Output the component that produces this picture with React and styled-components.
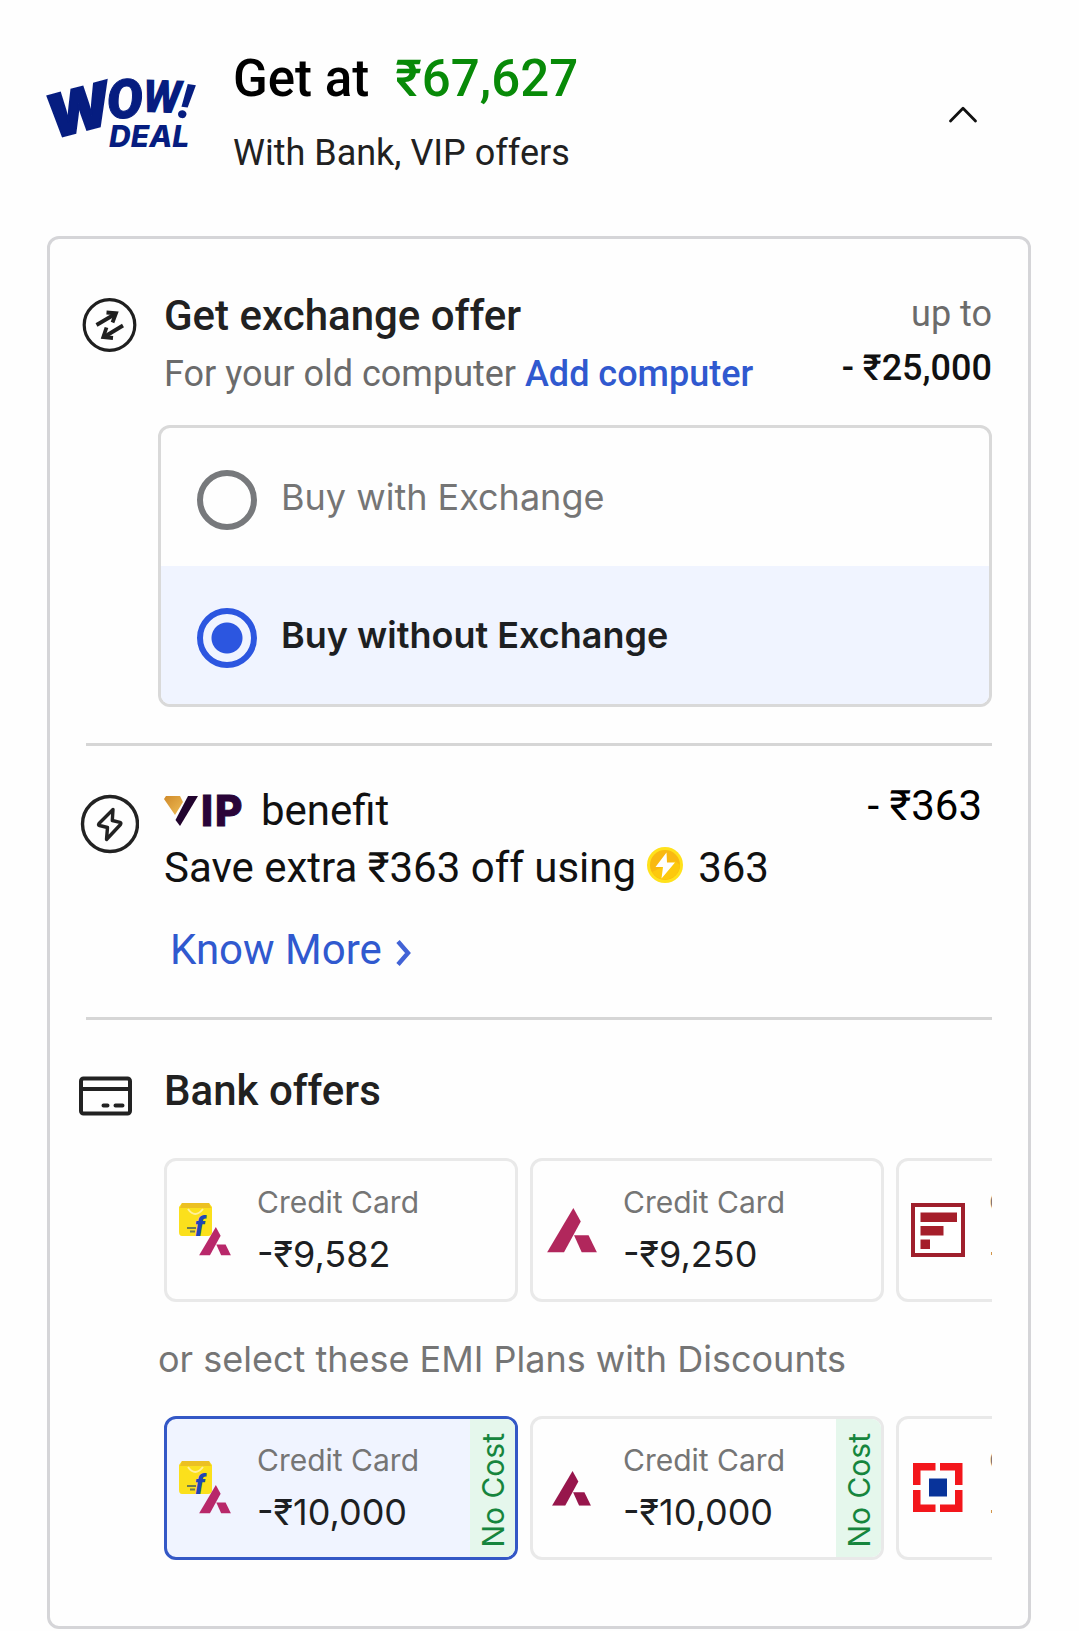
import React, { useState } from "react";
import styled, { createGlobalStyle } from "styled-components";

const exchangeOptions = [
  { id: "with", label: "Buy with Exchange" },
  { id: "without", label: "Buy without Exchange" },
];

const bankOffers = [
  { id: "flipkart-axis", logo: "flipkartAxis", amount: "-₹9,582" },
  { id: "axis", logo: "axis", amount: "-₹9,250" },
  { id: "federal", logo: "federal", amount: "-₹9,250" },
];

const emiOffers = [
  { id: "emi-flipkart-axis", logo: "flipkartAxis", amount: "-₹10,000", noCost: true },
  { id: "emi-axis", logo: "axisSmall", amount: "-₹10,000", noCost: true },
  { id: "emi-hdfc", logo: "hdfc", amount: "-₹10,000", noCost: true },
];

export default function App() {
  const [open, setOpen] = useState(true);
  const [exchange, setExchange] = useState("without");
  const [selected, setSelected] = useState("emi-flipkart-axis");

  const renderOffers = (offers) =>
    offers.map((offer) => (
      <OfferCard
        key={offer.id}
        type="button"
        $active={selected === offer.id}
        aria-pressed={selected === offer.id}
        onClick={() => setSelected(offer.id)}
      >
        <BankLogo name={offer.logo} />
        <OfferText>
          <OfferType>Credit Card</OfferType>
          <OfferAmount>{offer.amount}</OfferAmount>
        </OfferText>
        {offer.noCost && (
          <Ribbon>
            <span>No Cost</span>
          </Ribbon>
        )}
      </OfferCard>
    ));

  return (
    <Page>
      <GlobalStyle />
      <Header>
        <WowLogo />
        <HeaderText>
          <Title>
            <span>Get at</span>
            <Price>₹67,627</Price>
          </Title>
          <Subtitle>With Bank, VIP offers</Subtitle>
        </HeaderText>
        <Toggle
          type="button"
          aria-label="Toggle offers"
          aria-expanded={open}
          onClick={() => setOpen(!open)}
        >
          <svg width="30" height="18" viewBox="0 0 30 18" fill="none">
            <path
              d="M2.5 16 L15 3.3 L27.5 16"
              stroke="#111"
              strokeWidth="2.8"
              strokeLinecap="round"
              strokeLinejoin="round"
            />
          </svg>
        </Toggle>
      </Header>

      {open && (
        <Panel>
          {/* exchange */}
          <Section $top={48} $bottom={36}>
            <IconSlot $top={8}>
              <ExchangeIcon />
            </IconSlot>
            <SectionBody>
              <Row>
                <TextBlock>
                  <Heading>Get exchange offer</Heading>
                  <Description>
                    For your old computer <AddLink href="#">Add computer</AddLink>
                  </Description>
                </TextBlock>
                <Discount>
                  <span>up to</span>
                  <strong>- ₹25,000</strong>
                </Discount>
              </Row>
              <Options>
                {exchangeOptions.map((option) => (
                  <Option key={option.id} $active={exchange === option.id}>
                    <Radio
                      type="radio"
                      name="exchange"
                      value={option.id}
                      checked={exchange === option.id}
                      onChange={() => setExchange(option.id)}
                    />
                    <span>{option.label}</span>
                  </Option>
                ))}
              </Options>
            </SectionBody>
          </Section>

          <Divider />

          {/* vip */}
          <Section $top={36} $bottom={39}>
            <IconSlot $top={12}>
              <BoltIcon />
            </IconSlot>
            <SectionBody>
              <Row>
                <TextBlock>
                  <BenefitLine>
                    <VipLogo />
                    <span>benefit</span>
                  </BenefitLine>
                  <BenefitLine>
                    <span>Save extra ₹363 off using</span>
                    <Coin />
                    <span>363</span>
                  </BenefitLine>
                </TextBlock>
                <VipAmount>- ₹363</VipAmount>
              </Row>
              <KnowMore href="#">
                Know More
                <svg width="16" height="32" viewBox="0 0 16 32" fill="none">
                  <path d="M2 7.5 L12 19 L2 30.5" stroke="#4263d6" strokeWidth="4.4" />
                </svg>
              </KnowMore>
            </SectionBody>
          </Section>

          <Divider />

          {/* bank offers */}
          <Section $top={42} $bottom={66}>
            <IconSlot $top={4}>
              <CardIcon />
            </IconSlot>
            <SectionBody>
              <TextBlock>
                <Heading>Bank offers</Heading>
              </TextBlock>
              <OfferRow $top={38}>{renderOffers(bankOffers)}</OfferRow>
              <EmiLabel>or select these EMI Plans with Discounts</EmiLabel>
              <OfferRow $top={0}>{renderOffers(emiOffers)}</OfferRow>
            </SectionBody>
          </Section>
        </Panel>
      )}
    </Page>
  );
}

function WowLogo() {
  return (
    <LogoSvg viewBox="0 0 150 70" role="img" aria-label="WOW! DEAL">
      <g
        fill="#061d80"
        stroke="#061d80"
        fontFamily="Roboto, sans-serif"
        fontWeight="900"
        fontStyle="italic"
      >
        <text
          transform="translate(6 61) rotate(-15)"
          fontFamily="Inter, sans-serif"
          fontSize="59"
          strokeWidth="2"
        >
          W
        </text>
        <text transform="translate(61 41) rotate(-4)" fontSize="54" strokeWidth="1">O</text>
        <text transform="translate(95 34) rotate(2)" fontSize="46" strokeWidth="0">W</text>
        <text transform="translate(130 39) rotate(8)" fontSize="48" strokeWidth="0">!</text>
        <text
          x="62"
          y="69"
          fontFamily="Inter, sans-serif"
          fontWeight="800"
          fontSize="30"
          strokeWidth="0"
        >
          DEAL
        </text>
      </g>
    </LogoSvg>
  );
}

function ExchangeIcon() {
  return (
    <svg width="60" height="60" viewBox="0 0 60 60" fill="none" stroke="#1f1f1f">
      <circle cx="30.5" cy="30" r="25.3" strokeWidth="3.2" />
      <g strokeWidth="3.8">
        <path d="M17.5 30 L37 18.5" />
        <path d="M27.5 17.5 L37 18.3 L33.5 27.5" />
        <path d="M44 30.5 L25 42" />
        <path d="M27.5 32.5 L24.3 42 L34 43" />
      </g>
    </svg>
  );
}

function BoltIcon() {
  return (
    <svg width="60" height="60" viewBox="0 0 60 60" fill="none" stroke="#222" strokeWidth="3.4">
      <circle cx="31" cy="30" r="27.5" />
      <path
        d="M34 15.5 L20 29.5 Q18.8 31 20.5 31.5 L28.5 33.5 L27.5 45.5 L41.5 30.5 Q42.5 28.8 41 28.3 L33.3 26.5 Z"
        strokeLinejoin="round"
      />
    </svg>
  );
}

function CardIcon() {
  return (
    <svg width="60" height="60" viewBox="0 0 60 60" fill="none" stroke="#222">
      <rect x="2" y="12.5" width="49" height="35" rx="2.5" strokeWidth="4" />
      <path d="M2 23 H51" strokeWidth="4" />
      <path d="M24.5 39.5 H28.5 M36.5 39.5 H43.5" strokeWidth="4" strokeLinecap="round" />
    </svg>
  );
}

function VipLogo() {
  return (
    <svg width="82" height="32" viewBox="0 0 82 32" overflow="visible" role="img" aria-label="VIP">
      <defs>
        <linearGradient id="vipGold" x1="0" y1="0" x2="1" y2="1">
          <stop offset="0" stopColor="#cf8a2a" />
          <stop offset="1" stopColor="#f0bd55" />
        </linearGradient>
      </defs>
      <path d="M2 1 H16 L19 7 L11 20 L0 4 Z" fill="url(#vipGold)" />
      <path d="M24 1 H34 L16 31 L11.5 25 Z" fill="#22042e" />
      <text
        x="37 51"
        y="31"
        fill="#2a0438"
        stroke="#2a0438"
        strokeWidth="1"
        fontFamily="Inter, sans-serif"
        fontWeight="800"
        fontSize="42"
      >
        IP
      </text>
    </svg>
  );
}

function Coin() {
  return (
    <CoinSvg width="36" height="36" viewBox="0 0 36 36">
      <circle cx="18" cy="18" r="18" fill="#ffe11b" />
      <circle cx="18" cy="18" r="15" fill="#f9b912" />
      <path d="M5 25 A15 15 0 0 0 33 18 L28 14 Z" fill="#fdc90d" />
      <path d="M19.5 5.5 L8.5 20 H16 L14.5 31.5 L28 15.5 H20 Z" fill="#fff" />
    </CoinSvg>
  );
}

function AxisMark({ x, y, width, color }) {
  return (
    <svg x={x} y={y} width={width} height={(width * 132) / 148} viewBox="0 0 148 132">
      <path d="M78 0 L100 40 L50 132 H0 Z" fill={color} />
      <path d="M80 81 H123 L148 132 H103 Z" fill={color} />
    </svg>
  );
}

function BankLogo({ name }) {
  return (
    <BankSvg viewBox="0 0 60 60" aria-hidden="true">
      {name === "flipkartAxis" && (
        <>
          <path d="M6 3 H33 L36 7 V32 Q36 36 32 36 H6 Q3 36 3 32 V7 Z" fill="#fbe01c" />
          <path d="M6 3 H33 L35 8 H4 Z" fill="#ecc022" />
          <path d="M12 9 Q19 19 27 9" fill="none" stroke="#fff09a" strokeWidth="2" />
          <path d="M11 28 H20 M14 31.5 H19" stroke="#6d7a52" strokeWidth="2" />
          <text
            x="19"
            y="36"
            fill="#1f46b5"
            fontFamily="Roboto, sans-serif"
            fontSize="27"
            fontWeight="900"
            fontStyle="italic"
          >
            f
          </text>
          <AxisMark x={23} y={27} width={32} color="#b8286a" />
        </>
      )}
      {name === "axis" && <AxisMark x={5} y={8} width={50} color="#b1275c" />}
      {name === "axisSmall" && <AxisMark x={10} y={13} width={39} color="#97164c" />}
      {name === "federal" && (
        <>
          <rect x="5" y="5" width="50" height="50" fill="#fff" stroke="#9f1f2c" strokeWidth="4" />
          <path d="M12.5 12.5 H49 V22 H12.5 Z M12.5 26 H35.5 V35.5 H12.5 Z M12.5 39.5 H22 V49 H12.5 Z" fill="#a51e2a" />
        </>
      )}
      {name === "hdfc" && (
        <>
          <path
            d="M5 5 H27.5 V12.5 H12.5 V27 H5 Z M32 5 H54.5 V27 H47 V12.5 H32 Z M5 32 H12.5 V46.5 H27.5 V54 H5 Z M47 32 H54.5 V54 H32 V46.5 H47 Z"
            fill="#f3161b"
          />
          <rect x="21" y="20.5" width="18" height="18" fill="#08339a" />
        </>
      )}
    </BankSvg>
  );
}

const GlobalStyle = createGlobalStyle`
  * {
    box-sizing: border-box;
  }
  body {
    margin: 0;
    background: #fefefe;
    color: #111;
    font-family: Roboto, "Liberation Sans", sans-serif;
  }
  h1, h2, p {
    margin: 0;
    font-weight: 400;
  }
  svg {
    display: block;
    flex-shrink: 0;
  }
`;

const Page = styled.main`
  padding: 0 48px 2px 47px;
`;

const Header = styled.header`
  display: flex;
  align-items: center;
  gap: 36px;
  padding: 49px 44px 59px 0;
`;

const LogoSvg = styled.svg`
  width: 150px;
  height: 70px;
  overflow: visible;
`;

const HeaderText = styled.div`
  flex: 1;
  display: flex;
  flex-direction: column;
  gap: 20px;
`;

const Title = styled.h1`
  display: flex;
  gap: 26px;
  color: #000;
  font-size: 51px;
  font-weight: 500;
  line-height: 60px;
`;

const Price = styled.span`
  color: #088a08;
`;

const Subtitle = styled.p`
  color: #212121;
  font-size: 36px;
  line-height: 48px;
`;

const Toggle = styled.button`
  display: flex;
  align-items: center;
  justify-content: center;
  width: 48px;
  height: 48px;
  padding: 2px 0 0;
  border: 0;
  background: none;
  cursor: pointer;
`;

const Panel = styled.div`
  padding: 0 36px 0 29px;
  border: 3px solid #d5d5d8;
  border-radius: 12px;
`;

const Section = styled.section`
  display: grid;
  grid-template-columns: 60px minmax(0, 1fr);
  column-gap: 19px;
  padding: ${(props) => props.$top}px 0 ${(props) => props.$bottom}px;
`;

const IconSlot = styled.div`
  padding-top: ${(props) => props.$top}px;
`;

const SectionBody = styled.div`
  min-width: 0;
`;

const Row = styled.div`
  display: flex;
  justify-content: space-between;
  align-items: flex-start;
`;

const TextBlock = styled.div`
  padding-left: 6px;
`;

const Heading = styled.h2`
  color: #212121;
  font-size: 42px;
  font-weight: 500;
  line-height: 58px;
`;

const Description = styled.p`
  color: #6b6b6b;
  font-size: 36px;
  line-height: 58px;
`;

const AddLink = styled.a`
  color: #3059cf;
  font-weight: 500;
  text-decoration: none;
`;

const Discount = styled.p`
  display: flex;
  flex-direction: column;
  align-items: flex-end;
  color: #6b6b6b;
  font-size: 36px;
  line-height: 54px;
  white-space: nowrap;
  strong {
    color: #111;
    font-weight: 500;
  }
`;

const Options = styled.div`
  margin-top: 22px;
  border: 3px solid #d9d9d9;
  border-radius: 12px;
  overflow: hidden;
`;

const Option = styled.label`
  display: flex;
  align-items: center;
  gap: 24px;
  height: 138px;
  padding: 0 36px;
  background: ${(props) => (props.$active ? "#f0f4ff" : "transparent")};
  color: ${(props) => (props.$active ? "#1d1f22" : "#757575")};
  font-family: Inter, "Liberation Sans", sans-serif;
  font-size: 36px;
  font-weight: ${(props) => (props.$active ? 600 : 400)};
  line-height: 48px;
  cursor: pointer;
`;

const Radio = styled.input`
  appearance: none;
  flex-shrink: 0;
  width: 60px;
  height: 60px;
  margin: 6px 0 0;
  border: 6px solid #77797c;
  border-radius: 50%;
  &:checked {
    border-color: #2c56e0;
    background: radial-gradient(circle, #2c56e0 15px, transparent 16px);
  }
`;

const Divider = styled.hr`
  height: 3px;
  margin: 0 0 0 7px;
  border: 0;
  background: #d6d6d6;
`;

const BenefitLine = styled.p`
  display: flex;
  align-items: center;
  gap: 15px;
  font-size: 42px;
  line-height: 57px;
`;

const CoinSvg = styled.svg`
  margin: 0 0 5px -4px;
`;

const VipAmount = styled.p`
  padding-right: 10px;
  color: #000;
  font-size: 42px;
  line-height: 48px;
`;

const KnowMore = styled.a`
  display: inline-flex;
  align-items: center;
  gap: 14px;
  margin: 26px 0 0 12px;
  color: #3059cf;
  font-size: 42px;
  line-height: 56px;
  text-decoration: none;
`;

const OfferRow = styled.div`
  display: flex;
  gap: 12px;
  margin: ${(props) => props.$top}px 0 0 6px;
  overflow-x: auto;
  scrollbar-width: none;
`;

const OfferCard = styled.button`
  display: flex;
  flex: 0 0 354px;
  align-items: center;
  gap: 21px;
  height: 144px;
  padding: 0 0 0 9px;
  border: 3px solid ${(props) => (props.$active ? "#3458c6" : "#e9e9e9")};
  border-radius: 12px;
  background: ${(props) => (props.$active ? "#f0f4ff" : "transparent")};
  color: #1d1f22;
  font-family: Inter, "Liberation Sans", sans-serif;
  text-align: left;
  overflow: hidden;
  cursor: pointer;
`;

const BankSvg = styled.svg`
  width: 60px;
  height: 60px;
`;

const OfferText = styled.span`
  display: flex;
  flex: 1;
  flex-direction: column;
  padding-top: 2px;
  white-space: nowrap;
`;

const OfferType = styled.span`
  color: #757575;
  font-size: 30px;
  line-height: 46px;
`;

const OfferAmount = styled.span`
  font-size: 36px;
  line-height: 58px;
`;

const Ribbon = styled.span`
  display: flex;
  align-self: stretch;
  align-items: center;
  justify-content: center;
  width: 45px;
  padding-top: 4px;
  background: #e5f7ec;
  color: #16853d;
  font-size: 30px;
  span {
    writing-mode: vertical-rl;
    transform: rotate(180deg);
    white-space: nowrap;
  }
`;

const EmiLabel = styled.p`
  margin: 32px 0;
  color: #757575;
  font-family: Inter, "Liberation Sans", sans-serif;
  font-size: 36px;
  line-height: 50px;
`;
